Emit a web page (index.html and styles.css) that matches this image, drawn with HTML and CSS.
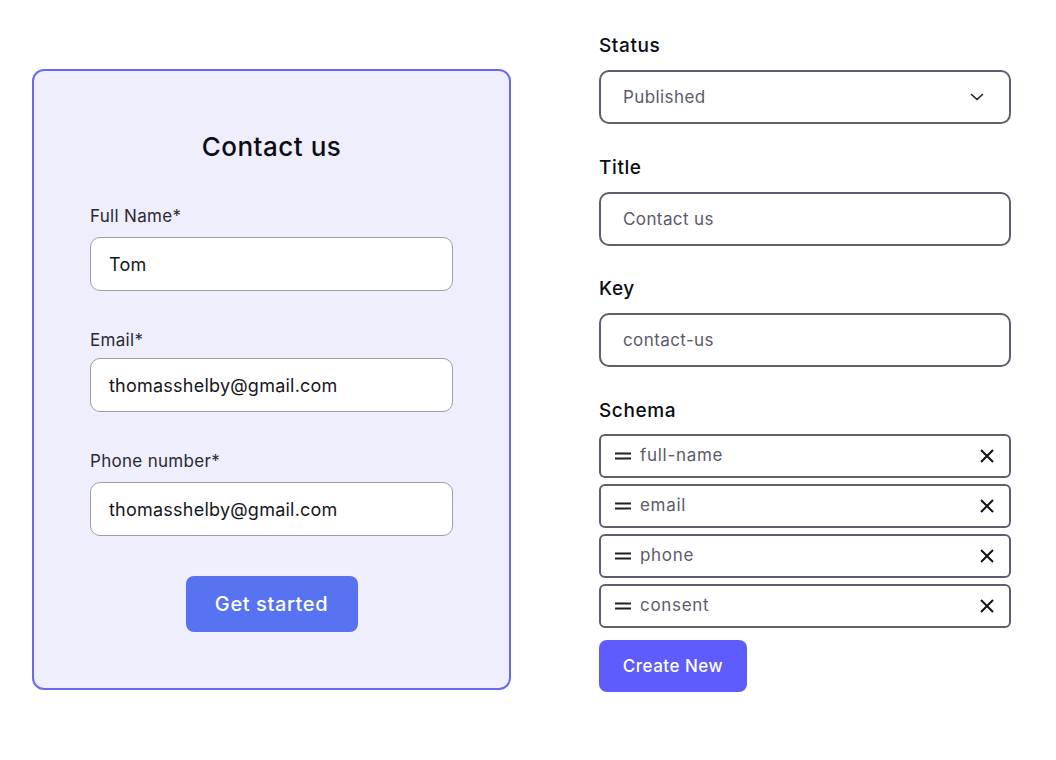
FILE: index.html
```html
<!DOCTYPE html>
<html>
<head>
<meta charset="utf-8">
<link rel="stylesheet" href="styles.css">
</head>
<body>
<div class="page">
  <div class="card">
    <h1 class="card-title">Contact us</h1>
    <div class="form-group group-name">
      <label class="form-label">Full Name*</label>
      <div class="form-input">Tom</div>
    </div>
    <div class="form-group group-email">
      <label class="form-label">Email*</label>
      <div class="form-input">thomasshelby@gmail.com</div>
    </div>
    <div class="form-group group-phone">
      <label class="form-label">Phone number*</label>
      <div class="form-input">thomasshelby@gmail.com</div>
    </div>
    <div class="btn-row"><button class="btn-start">Get started</button></div>
  </div>

  <div class="panel">
    <div class="field">
      <div class="field-label">Status</div>
      <div class="field-box select">
        <span>Published</span>
        <svg class="chevron" width="16" height="16" viewBox="0 0 16 16"><path d="M2.5 5.5 L8 10.5 L13.5 5.5" fill="none" stroke="#1f1f2a" stroke-width="1.6" stroke-linecap="round" stroke-linejoin="round"/></svg>
      </div>
    </div>
    <div class="field">
      <div class="field-label">Title</div>
      <div class="field-box">Contact us</div>
    </div>
    <div class="field">
      <div class="field-label">Key</div>
      <div class="field-box">contact-us</div>
    </div>
    <div class="field schema">
      <div class="field-label">Schema</div>
      <div class="schema-list">
        <div class="schema-row">
          <svg class="handle" width="18" height="8" viewBox="0 0 18 8"><path d="M1 1.5H17M1 6.5H17" stroke="#1f1f2a" stroke-width="2"/></svg>
          <span class="schema-name">full-name</span>
          <svg class="close" width="16" height="16" viewBox="0 0 16 16"><path d="M2 2L14 14M14 2L2 14" stroke="#111" stroke-width="2"/></svg>
        </div>
        <div class="schema-row">
          <svg class="handle" width="18" height="8" viewBox="0 0 18 8"><path d="M1 1.5H17M1 6.5H17" stroke="#1f1f2a" stroke-width="2"/></svg>
          <span class="schema-name">email</span>
          <svg class="close" width="16" height="16" viewBox="0 0 16 16"><path d="M2 2L14 14M14 2L2 14" stroke="#111" stroke-width="2"/></svg>
        </div>
        <div class="schema-row">
          <svg class="handle" width="18" height="8" viewBox="0 0 18 8"><path d="M1 1.5H17M1 6.5H17" stroke="#1f1f2a" stroke-width="2"/></svg>
          <span class="schema-name">phone</span>
          <svg class="close" width="16" height="16" viewBox="0 0 16 16"><path d="M2 2L14 14M14 2L2 14" stroke="#111" stroke-width="2"/></svg>
        </div>
        <div class="schema-row">
          <svg class="handle" width="18" height="8" viewBox="0 0 18 8"><path d="M1 1.5H17M1 6.5H17" stroke="#1f1f2a" stroke-width="2"/></svg>
          <span class="schema-name">consent</span>
          <svg class="close" width="16" height="16" viewBox="0 0 16 16"><path d="M2 2L14 14M14 2L2 14" stroke="#111" stroke-width="2"/></svg>
        </div>
      </div>
      <button class="btn-create">Create New</button>
    </div>
  </div>
</div>
</body>
</html>
```

FILE: styles.css
```css
* { box-sizing: border-box; }
html, body { margin: 0; padding: 0; background: #ffffff; }
body {
  font-family: "Inter", "Open Sans", "Liberation Sans", sans-serif;
  color: #111;
  width: 1056px;
  height: 760px;
  overflow: hidden;
}
.page {
  display: flex;
  align-items: flex-start;
  padding: 34px 0 0 32px;
  gap: 88px;
}
.card {
  margin-top: 35px;
  width: 479px;
  height: 621px;
  border: 2px solid #6b69f4;
  border-radius: 12px;
  background: #efeefd;
  padding: 60px 56px 0 56px;
  display: flex;
  flex-direction: column;
}
.card-title {
  margin: 0 0 42px 0;
  font-size: 26px;
  line-height: 32px;
  font-weight: 500;
  letter-spacing: 0.5px;
  text-align: center;
  color: #0c0c14;
}
.form-group {
  display: flex;
  flex-direction: column;
  gap: 10px;
}
.group-name { margin-bottom: 38px; }
.group-email { gap: 7px; margin-bottom: 38px; }
.group-phone { margin-bottom: 40px; }
.form-label {
  font-size: 17px;
  line-height: 22px;
  letter-spacing: 0.3px;
  color: #2a2a33;
}
.form-input {
  height: 54px;
  background: #fff;
  border: 1px solid #9e9ea6;
  border-radius: 10px;
  padding: 0 18px;
  display: flex;
  align-items: center;
  font-size: 18px;
  letter-spacing: 0.23px;
  color: #16161e;
}
.btn-row { display: flex; justify-content: center; }
.btn-start {
  width: 172px;
  height: 56px;
  border: none;
  border-radius: 8px;
  background: #5773f2;
  color: #fff;
  font-family: inherit;
  font-size: 20px;
  font-weight: 500;
  letter-spacing: 0.6px;
}
.panel {
  width: 412px;
  display: flex;
  flex-direction: column;
  gap: 30.67px;
  margin-top: -1px;
}
.field { display: flex; flex-direction: column; gap: 13px; }
.field.schema { gap: 0; }
.field-label {
  font-size: 19px;
  line-height: 24px;
  font-weight: 500;
  letter-spacing: 0.6px;
  color: #0c0c14;
  padding-top: 1px;
  margin-bottom: -1px;
}
.field.schema .field-label { margin-bottom: 11px; }
.field-box {
  height: 54px;
  border: 2px solid #5f5e6e;
  border-radius: 10px;
  padding: 0 22px;
  display: flex;
  align-items: center;
  font-size: 17px;
  letter-spacing: 0.4px;
  color: #5b5a6b;
}
.field-box.select { justify-content: space-between; padding-right: 24px; }
.schema-list { display: flex; flex-direction: column; gap: 6px; }
.schema-row {
  height: 44px;
  border: 2px solid #5f5e6e;
  border-radius: 6px;
  display: flex;
  align-items: center;
  padding: 0 14px 0 13px;
  font-size: 17px;
  letter-spacing: 0.7px;
  color: #5b5a6b;
}
.handle { flex: none; margin-right: 8px; }
.schema-name { flex: 1; padding-bottom: 2px; }
.close { flex: none; }
.btn-create {
  margin-top: 12px;
  width: 148px;
  height: 52px;
  border: none;
  border-radius: 8px;
  background: #5e5cfd;
  color: #fff;
  font-family: inherit;
  font-size: 17px;
  font-weight: 500;
  letter-spacing: 0.5px;
}
```
